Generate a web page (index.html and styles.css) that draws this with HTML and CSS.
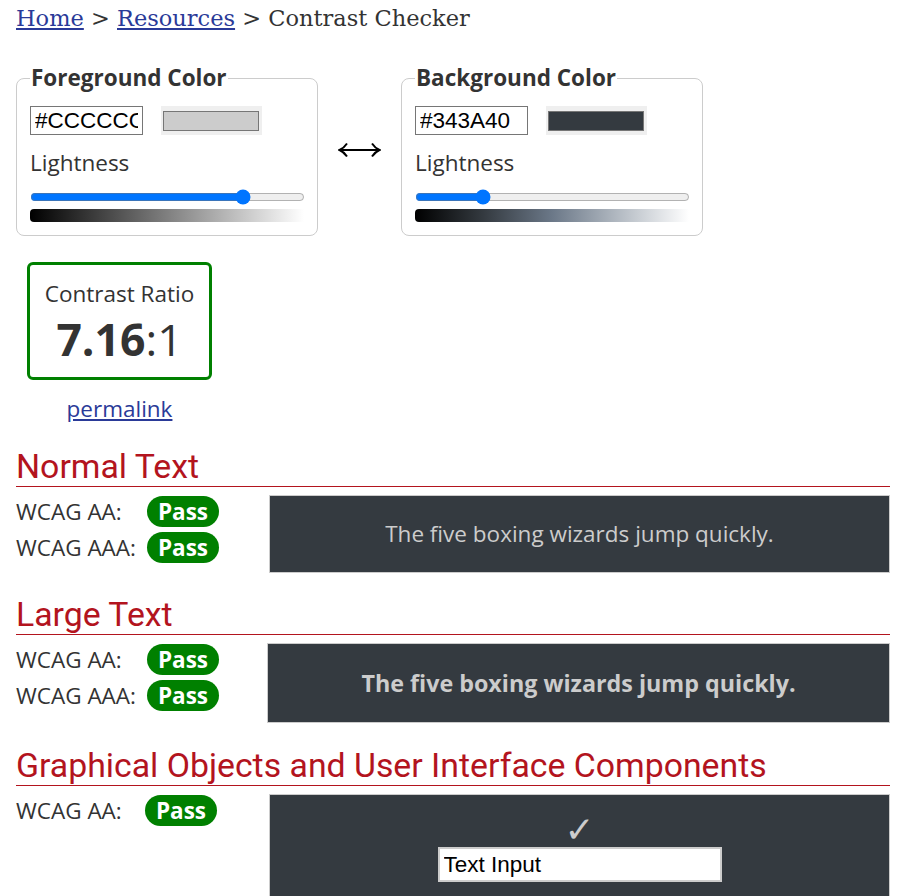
FILE: index.html
```html
<!DOCTYPE html>
<html lang="en">
<head>
<meta charset="utf-8">
<title>Contrast Checker</title>
<link rel="stylesheet" href="styles.css">
</head>
<body>
<div class="page">
  <nav class="crumbs"><a href="#">Home</a> &gt; <a href="#">Resources</a> &gt; Contrast Checker</nav>

  <div class="pickers">
    <fieldset class="picker">
      <legend>Foreground Color</legend>
      <div class="hexrow">
        <input class="hex" type="text" value="#CCCCCC">
        <div class="swatch"><div class="swatch-fill fg"></div></div>
      </div>
      <div class="light-label">Lightness</div>
      <input class="range" type="range" min="0" max="100" value="79">
      <div class="grad grad-fg"></div>
    </fieldset>
    <div class="swap" aria-label="swap colors">
      <svg width="43" height="16" viewBox="0 0 43 16"><path d="M2 8 H41 M9 1.5 Q6 6 1.5 8 Q6 10 9 14.5 M34 1.5 Q37 6 41.5 8 Q37 10 34 14.5" fill="none" stroke="#000" stroke-width="2"/></svg>
    </div>
    <fieldset class="picker">
      <legend>Background Color</legend>
      <div class="hexrow">
        <input class="hex" type="text" value="#343A40">
        <div class="swatch"><div class="swatch-fill bg"></div></div>
      </div>
      <div class="light-label">Lightness</div>
      <input class="range" type="range" min="0" max="100" value="23">
      <div class="grad grad-bg"></div>
    </fieldset>
  </div>

  <div class="ratio-wrap">
    <div class="ratio-box">
      <div class="ratio-title">Contrast Ratio</div>
      <div class="ratio-value"><b>7.16</b>:1</div>
    </div>
    <a class="permalink" href="#">permalink</a>
  </div>

  <section class="result result-first">
    <h2>Normal Text</h2>
    <div class="result-body">
      <div class="checks">
        <div class="check"><span class="lbl">WCAG AA:</span><span class="pass">Pass</span></div>
        <div class="check"><span class="lbl">WCAG AAA:</span><span class="pass">Pass</span></div>
      </div>
      <div class="preview preview-normal">The five boxing wizards jump quickly.</div>
    </div>
  </section>

  <section class="result">
    <h2>Large Text</h2>
    <div class="result-body">
      <div class="checks">
        <div class="check"><span class="lbl">WCAG AA:</span><span class="pass">Pass</span></div>
        <div class="check"><span class="lbl">WCAG AAA:</span><span class="pass">Pass</span></div>
      </div>
      <div class="preview preview-large">The five boxing wizards jump quickly.</div>
    </div>
  </section>

  <section class="result result-last">
    <h2>Graphical Objects and User Interface Components</h2>
    <div class="result-body">
      <div class="checks">
        <div class="check"><span class="lbl lbl-narrow">WCAG AA:</span><span class="pass">Pass</span></div>
      </div>
      <div class="preview preview-ui">
        <div class="tick">&#10003;</div>
        <input class="ui-input" type="text" value="Text Input">
      </div>
    </div>
  </section>
</div>
</body>
</html>
```

FILE: styles.css
```css
html, body {
  margin: 0;
  padding: 0;
  background: #fff;
}
body {
  font-family: "Open Sans", "DejaVu Sans", sans-serif;
  color: #333;
  font-size: 22.5px;
}
.page {
  width: 874px;
  margin: 0 0 0 16px;
}
a {
  color: #2a3a98;
}
.crumbs {
  font-family: "DejaVu Serif", "Liberation Serif", serif;
  font-size: 22.5px;
  line-height: 36px;
  color: #333;
}

.pickers {
  display: flex;
  align-items: center;
  gap: 20px;
  margin-top: 27px;
}
.picker {
  margin: 0;
  width: 302px;
  box-sizing: border-box;
  border: 1px solid #ccc;
  border-radius: 8px;
  padding: 0 13px 13px 13px;
  min-width: 0;
}
.picker legend {
  font-weight: 700;
  font-size: 22.5px;
  line-height: 30px;
  padding: 0 1px;
  color: #333;
}
.hexrow {
  display: flex;
  align-items: center;
  gap: 18px;
  margin-top: 13px;
}
.hex {
  box-sizing: border-box;
  width: 113px;
  height: 29px;
  border: 1px solid #767676;
  padding: 0 4px;
  font-family: "Liberation Sans", Arial, sans-serif;
  font-size: 22.5px;
  color: #000;
  margin: 0;
}
.swatch {
  box-sizing: border-box;
  width: 101px;
  height: 29px;
  background: #efefef;
  padding: 5px 3px 4px 2px;
}
.swatch-fill {
  box-sizing: border-box;
  height: 100%;
  border: 1px solid #767676;
}
.swatch-fill.fg { background: #cccccc; }
.swatch-fill.bg { background: #343a40; }
.light-label {
  margin-top: 13px;
  line-height: 30px;
}
.range {
  display: block;
  width: 275px;
  margin: 11px 0 0 0;
  height: 16px;
}
.grad {
  height: 13px;
  margin-top: 4px;
  border-radius: 4px 0 0 4px;
}
.grad-fg {
  background: linear-gradient(to right, #000, #fff);
}
.grad-bg {
  background: linear-gradient(to right, #000, #343a40 25%, #6b7888 50%, #b5bcc4 75%, #fff);
}
.swap {
  width: 43px;
  height: 16px;
  margin-top: 0;
}
.swap svg {
  display: block;
}

.ratio-wrap {
  width: 185px;
  margin: 26px 0 0 11px;
  text-align: center;
}
.ratio-box {
  box-sizing: border-box;
  border: 3px solid #008000;
  border-radius: 6px;
  height: 118px;
  padding-top: 14px;
}
.ratio-title {
  line-height: 30px;
}
.ratio-value {
  font-size: 44.5px;
  line-height: 56px;
  margin-top: 2px;
}
.ratio-value b {
  font-weight: 700;
}
.permalink {
  display: inline-block;
  margin-top: 14px;
  line-height: 30px;
}

.result {
  margin-top: 23px;
}
.result-first {
  margin-top: 24px;
}
.result-last {
  margin-top: 24px;
}
.result h2 {
  font-family: Roboto, "Open Sans", sans-serif;
  font-weight: 400;
  font-size: 33.8px;
  line-height: 38px;
  color: #b3141e;
  margin: 0;
  border-bottom: 1px solid #b3141e;
}
.result-body {
  display: flex;
  align-items: flex-start;
  margin-top: 8px;
}
.checks {
  width: 253px;
  flex: none;
  padding-top: 1px;
}
.check {
  display: flex;
  align-items: center;
  height: 31px;
  margin-bottom: 5px;
}
.lbl {
  width: 131px;
  line-height: 30px;
}
.lbl-narrow { width: 129px; }
.pass {
  display: inline-block;
  width: 72px;
  height: 31px;
  line-height: 31px;
  border-radius: 16px;
  background: #008000;
  color: #fff;
  font-weight: 700;
  text-align: center;
}
.preview {
  flex: 1;
  box-sizing: border-box;
  background: #343a40;
  color: #cccccc;
  border: 1px solid #ccc;
  text-align: center;
}
.preview-normal {
  height: 78px;
  padding-top: 23px;
  line-height: 29px;
}
.preview-large {
  margin-left: -2px;
  font-size: 23.3px;
  font-weight: 700;
  line-height: 33px;
  padding-top: 23px;
  height: 80px;
}
.preview-ui {
  height: 140px;
  padding-top: 14px;
}
.tick {
  font-family: "DejaVu Sans", sans-serif;
  font-weight: 700;
  font-size: 36px;
  line-height: 34px;
  padding-top: 4px;
  color: #ccc;
}
.ui-input {
  box-sizing: border-box;
  width: 284px;
  height: 35px;
  margin: 0;
  border: 2px solid #ccc;
  background: #fff;
  padding: 0 4px;
  font-family: "Liberation Sans", Arial, sans-serif;
  font-size: 22.5px;
  color: #000;
}
```
